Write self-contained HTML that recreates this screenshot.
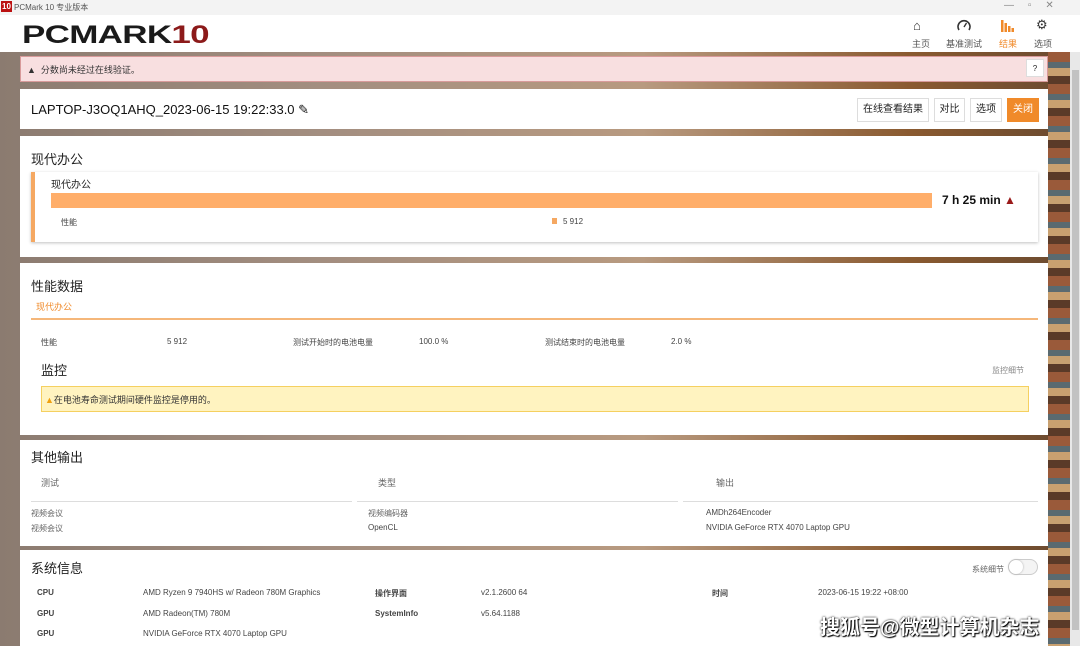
<!DOCTYPE html>
<html><head><meta charset="utf-8"><style>
*{margin:0;padding:0;box-sizing:border-box}
body{width:1080px;height:646px;overflow:hidden;position:relative;font-family:"Liberation Sans","Noto Sans CJK SC",sans-serif;color:#222;background:#fff}
.abs{position:absolute}
.bg{position:absolute;left:0;top:52px;width:1070px;height:594px;background:linear-gradient(90deg,#8b7b70 0%,#a38e80 30%,#b89a80 60%,#8a5a30 85%,#6a4a30 100%)}
.bgr{position:absolute;left:1048px;top:52px;width:22px;height:594px;background:repeating-linear-gradient(180deg,#9a5a3a 0 10px,#5a6a70 10px 16px,#c8a070 16px 24px,#5a3a28 24px 32px)}
.card{position:absolute;left:20px;width:1028px;background:#fff}
.t{position:absolute;white-space:nowrap}
.s{font-size:8px;color:#444}
.h{font-size:13px;color:#222}
</style></head><body>
<div class="abs" style="left:0;top:0;width:1080px;height:15px;background:#f3f3f3"></div>
<div class="abs" style="left:1px;top:1px;width:11px;height:11px;background:#b11;color:#fff;font-size:8px;font-weight:bold;line-height:11px;text-align:center">10</div>
<div class="t" style="left:14px;top:2px;font-size:8px;color:#555">PCMark 10 专业版本</div>
<div class="t" style="left:1004px;top:0;font-size:10px;color:#888">—&nbsp;&nbsp;&nbsp;&nbsp;&nbsp;▫&nbsp;&nbsp;&nbsp;&nbsp;&nbsp;✕</div>
<div class="t" style="left:22px;top:21px;font-size:25px;font-weight:900;letter-spacing:-0.5px;color:#1a1a1a;font-family:'Liberation Sans',sans-serif;transform:scaleX(1.4);transform-origin:left">PCMARK<span style="color:#8c1a1a">10</span></div>
<div class="t" style="left:913px;top:18px;font-size:13px;color:#333">⌂</div>
<div class="t" style="left:912px;top:37px;font-size:9px;color:#555">主页</div>
<svg class="abs" style="left:957px;top:19px" width="14" height="12"><path d="M2 11 A6 6 0 1 1 12 11" fill="none" stroke="#333" stroke-width="1.6"/><path d="M7 8 L9.5 4" stroke="#333" stroke-width="1.4"/></svg>
<div class="t" style="left:946px;top:37px;font-size:9px;color:#555">基准测试</div>
<svg class="abs" style="left:1001px;top:20px" width="14" height="12"><rect x="0" y="0" width="2.5" height="12" fill="#f08a2a"/><rect x="3.5" y="3" width="2.5" height="9" fill="#f08a2a"/><rect x="7" y="6" width="2.5" height="6" fill="#f08a2a"/><rect x="10.5" y="8" width="2.5" height="4" fill="#f08a2a"/></svg>
<div class="t" style="left:999px;top:37px;font-size:9px;color:#f08a2a">结果</div>
<div class="t" style="left:1036px;top:17px;font-size:13px;color:#333">⚙</div>
<div class="t" style="left:1034px;top:37px;font-size:9px;color:#555">选项</div>
<div class="bg"></div><div class="bgr"></div>
<div class="abs" style="left:1070px;top:52px;width:10px;height:594px;background:#e8e8e8"></div>
<div class="abs" style="left:1072px;top:70px;width:7px;height:560px;background:#c2c2c2"></div>
<div class="abs" style="left:20px;top:56px;width:1028px;height:26px;background:#f8dfe0;border:1px solid #d89a9a"></div>
<div class="t" style="left:27px;top:63px;font-size:9px;color:#333">▲&nbsp;&nbsp;分数尚未经过在线验证。</div>
<div class="abs" style="left:1026px;top:59px;width:18px;height:18px;background:#fff;border:1px solid #ddd;font-size:8px;text-align:center;line-height:17px">?</div>
<div class="card" style="top:89px;height:40px"></div>
<div class="t" style="left:31px;top:102px;font-size:13px;color:#111">LAPTOP-J3OQ1AHQ_2023-06-15 19:22:33.0 ✎</div>
<div class="abs" style="left:857px;top:98px;width:72px;height:24px;border:1px solid #ddd;font-size:10px;text-align:center;line-height:22px">在线查看结果</div>
<div class="abs" style="left:934px;top:98px;width:31px;height:24px;border:1px solid #ddd;font-size:10px;text-align:center;line-height:22px">对比</div>
<div class="abs" style="left:970px;top:98px;width:32px;height:24px;border:1px solid #ddd;font-size:10px;text-align:center;line-height:22px">选项</div>
<div class="abs" style="left:1007px;top:98px;width:32px;height:24px;background:#f08a2a;color:#fff;font-size:10px;text-align:center;line-height:24px">关闭</div>
<div class="card" style="top:136px;height:121px"></div>
<div class="t h" style="left:31px;top:149px">现代办公</div>
<div class="abs" style="left:31px;top:172px;width:1007px;height:70px;background:#fff;border-left:4px solid #f5a862;box-shadow:0 1px 3px rgba(0,0,0,.25)"></div>
<div class="t" style="left:51px;top:176px;font-size:10px">现代办公</div>
<div class="abs" style="left:51px;top:193px;width:881px;height:15px;background:#ffae6a"></div>
<div class="t" style="left:942px;top:193px;font-size:12px;font-weight:bold;color:#111">7 h 25 min <span style="color:#9a1a1a">▲</span></div>
<div class="t s" style="left:61px;top:217px">性能</div>
<div class="abs" style="left:552px;top:218px;width:5px;height:6px;background:#f5a862"></div>
<div class="t s" style="left:563px;top:217px">5 912</div>
<div class="card" style="top:263px;height:172px"></div>
<div class="t h" style="left:31px;top:276px">性能数据</div>
<div class="t" style="left:36px;top:300px;font-size:9px;color:#f08a2a">现代办公</div>
<div class="abs" style="left:31px;top:318px;width:1007px;height:2px;background:#f5b77a"></div>
<div class="t s" style="left:41px;top:337px">性能</div>
<div class="t s" style="left:167px;top:337px">5 912</div>
<div class="t s" style="left:293px;top:337px">测试开始时的电池电量</div>
<div class="t s" style="left:419px;top:337px">100.0 %</div>
<div class="t s" style="left:545px;top:337px">测试结束时的电池电量</div>
<div class="t s" style="left:671px;top:337px">2.0 %</div>
<div class="t h" style="left:41px;top:360px">监控</div>
<div class="t s" style="left:992px;top:365px;color:#888">监控细节</div>
<div class="abs" style="left:41px;top:386px;width:988px;height:26px;background:#fff3c0;border:1px solid #f5d060"></div>
<div class="t" style="left:45px;top:393px;font-size:9px;color:#333"><span style="color:#f0a010">▲</span>在电池寿命测试期间硬件监控是停用的。</div>
<div class="card" style="top:440px;height:106px"></div>
<div class="t h" style="left:31px;top:447px">其他输出</div>
<div class="t" style="left:41px;top:476px;font-size:9px;color:#666">测试</div>
<div class="t" style="left:378px;top:476px;font-size:9px;color:#666">类型</div>
<div class="t" style="left:716px;top:476px;font-size:9px;color:#666">输出</div>
<div class="abs" style="left:31px;top:501px;width:321px;height:1px;background:#ddd"></div>
<div class="abs" style="left:357px;top:501px;width:321px;height:1px;background:#ddd"></div>
<div class="abs" style="left:683px;top:501px;width:322px;height:1px;background:#ddd"></div>
<div class="abs" style="left:1005px;top:501px;width:33px;height:1px;background:#ddd"></div>
<div class="t s" style="left:31px;top:508px;color:#666">视频会议</div>
<div class="t s" style="left:368px;top:508px;color:#666">视频编码器</div>
<div class="t s" style="left:706px;top:508px">AMDh264Encoder</div>
<div class="t s" style="left:31px;top:523px;color:#666">视频会议</div>
<div class="t s" style="left:368px;top:523px">OpenCL</div>
<div class="t s" style="left:706px;top:523px">NVIDIA GeForce RTX 4070 Laptop GPU</div>
<div class="card" style="top:550px;height:96px"></div>
<div class="t h" style="left:31px;top:558px">系统信息</div>
<div class="t s" style="left:972px;top:564px;color:#666">系统细节</div>
<div class="abs" style="left:1008px;top:559px;width:30px;height:16px;border-radius:8px;border:1px solid #ccc;background:#f4f4f4"></div>
<div class="abs" style="left:1009px;top:560px;width:14px;height:14px;border-radius:50%;background:#fff;box-shadow:0 0 2px #aaa"></div>
<div class="t s" style="left:37px;top:588px;font-weight:bold">CPU</div>
<div class="t s" style="left:143px;top:588px">AMD Ryzen 9 7940HS w/ Radeon 780M Graphics</div>
<div class="t s" style="left:375px;top:588px;font-weight:bold">操作界面</div>
<div class="t s" style="left:481px;top:588px">v2.1.2600 64</div>
<div class="t s" style="left:712px;top:588px;font-weight:bold">时间</div>
<div class="t s" style="left:818px;top:588px">2023-06-15 19:22 +08:00</div>
<div class="t s" style="left:37px;top:609px;font-weight:bold">GPU</div>
<div class="t s" style="left:143px;top:609px">AMD Radeon(TM) 780M</div>
<div class="t s" style="left:375px;top:609px;font-weight:bold">SystemInfo</div>
<div class="t s" style="left:481px;top:609px">v5.64.1188</div>
<div class="t s" style="left:37px;top:629px;font-weight:bold">GPU</div>
<div class="t s" style="left:143px;top:629px">NVIDIA GeForce RTX 4070 Laptop GPU</div>
<div class="t" style="left:820px;top:611px;font-size:20px;font-weight:bold;color:#fff;text-shadow:0 0 2px #000,1px 1px 1px #000">搜狐号@微型计算机杂志</div>
</body></html>
